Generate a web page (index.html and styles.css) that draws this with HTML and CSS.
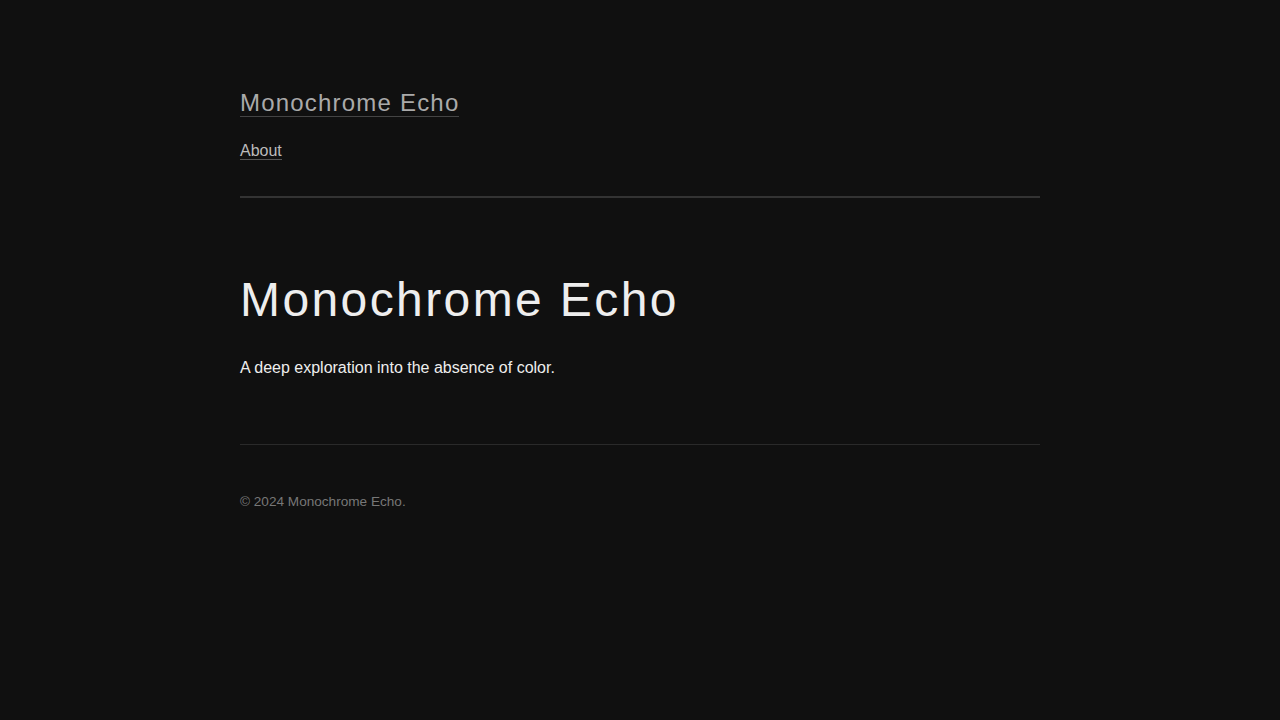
FILE: index.html
```html
<!DOCTYPE html>
<html lang="en">
<head>
    <meta charset="UTF-8">
    <meta name="viewport" content="width=device-width, initial-scale=1.0">
    <title>Monochrome Echo</title>
    <link rel="stylesheet" href="styles.css">
</head>
<body>
    <div class="container">
        <header class="site-header">
            <a class="site-title" href="#">Monochrome Echo</a>
            <nav class="site-nav">
                <a href="#">About</a>
            </nav>
        </header>

        <main class="hero">
            <h1>Monochrome Echo</h1>
            <p>A deep exploration into the absence of color.</p>
        </main>

        <footer class="site-footer">
            <p>&copy; 2024 Monochrome Echo.</p>
        </footer>
    </div>
</body>
</html>
```

FILE: styles.css
```css
/* Base */
body {
    margin: 0;
    font-family: 'Liberation Sans', Arial, Helvetica, sans-serif;
    background-color: #101010;
    color: #eeeeee;
}

a {
    text-decoration: none;
}

.container {
    width: 800px;
    margin: 0 auto;
    padding-top: 90px;
}

/* Header */
.site-header {
    padding-bottom: 36px;
    border-bottom: 2px solid #333;
}

.site-title {
    display: inline-block;
    font-size: 24px;
    line-height: 26px;
    letter-spacing: 0.05em;
    color: #aaaaaa;
    border-bottom: 1px solid #444;
}

.site-nav {
    margin-top: 24px;
}

.site-nav a {
    font-size: 16px;
    line-height: 19px;
    color: #bbbbbb;
    border-bottom: 1px solid #555;
}

/* Hero */
.hero {
    padding: 74px 0 64px;
    border-bottom: 1px solid #2a2a2a;
}

.hero h1 {
    margin: 0;
    font-size: 48px;
    font-weight: normal;
    line-height: 56px;
    letter-spacing: 0.05em;
    color: #eeeeee;
}

.hero p {
    margin: 28px 0 0;
    font-size: 16px;
    line-height: 24px;
}

/* Footer */
.site-footer {
    padding-top: 49px;
}

.site-footer p {
    margin: 0;
    font-size: 0.85rem;
    color: #777777;
}
```
